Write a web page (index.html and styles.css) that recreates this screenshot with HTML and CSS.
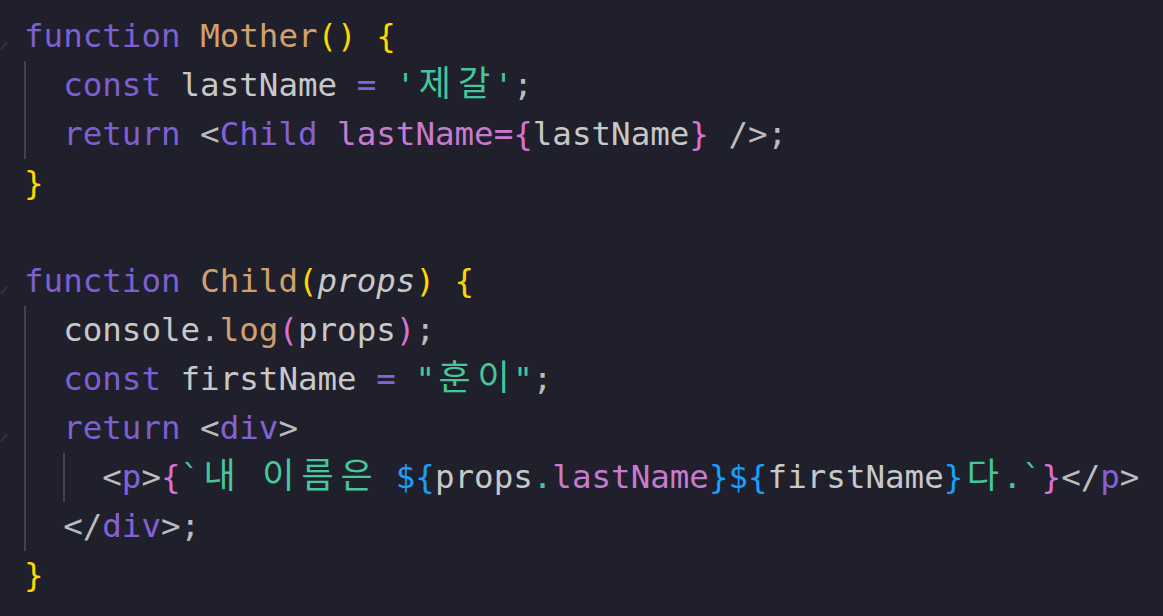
FILE: index.html
```html
<!DOCTYPE html>
<html lang="ko">
<head>
<meta charset="utf-8">
<title>Code</title>
<link rel="stylesheet" href="styles.css">
</head>
<body>
<div class="editor">
  <div class="line"><span class="gutter"><svg class="fold" width="10" height="49" viewBox="0 0 10 49"><path d="M1 37 L7 30"/></svg></span><span class="code"><span class="kw">function</span> <span class="fn">Mother</span><span class="b1">()</span> <span class="b1">{</span></span></div>
  <div class="line"><span class="gutter"></span><span class="code"><span class="ind"></span><span class="kw">const</span> <span class="var">lastName</span> <span class="op">=</span> <span class="str">'<span class="k">제</span><span class="k">갈</span>'</span><span class="pn">;</span></span></div>
  <div class="line"><span class="gutter"></span><span class="code"><span class="ind"></span><span class="kw">return</span> <span class="pn">&lt;</span><span class="tag">Child</span> <span class="attr">lastName=</span><span class="b2">{</span><span class="var">lastName</span><span class="b2">}</span><span class="pn"> /&gt;;</span></span></div>
  <div class="line"><span class="gutter"></span><span class="code"><span class="b1">}</span></span></div>
  <div class="line"><span class="gutter"></span><span class="code"></span></div>
  <div class="line"><span class="gutter"><svg class="fold" width="10" height="49" viewBox="0 0 10 49"><path d="M1 37 L7 30"/></svg></span><span class="code"><span class="kw">function</span> <span class="fn">Child</span><span class="b1">(</span><span class="param">props</span><span class="b1">)</span> <span class="b1">{</span></span></div>
  <div class="line"><span class="gutter"></span><span class="code"><span class="ind"></span><span class="var">console</span><span class="pn">.</span><span class="fn">log</span><span class="b2">(</span><span class="var">props</span><span class="b2">)</span><span class="pn">;</span></span></div>
  <div class="line"><span class="gutter"></span><span class="code"><span class="ind"></span><span class="kw">const</span> <span class="var">firstName</span> <span class="op">=</span> <span class="str">"<span class="k">훈</span><span class="k">이</span>"</span><span class="pn">;</span></span></div>
  <div class="line"><span class="gutter"><svg class="fold" width="10" height="49" viewBox="0 0 10 49"><path d="M1 37 L7 30"/></svg></span><span class="code"><span class="ind"></span><span class="kw">return</span> <span class="pn">&lt;</span><span class="tag">div</span><span class="pn">&gt;</span></span></div>
  <div class="line"><span class="gutter"></span><span class="code"><span class="ind"></span><span class="ind"></span><span class="pn">&lt;</span><span class="tag">p</span><span class="pn">&gt;</span><span class="b2">{</span><span class="str">`<span class="k">내</span> <span class="k">이</span><span class="k">름</span><span class="k">은</span> </span><span class="b3">${</span><span class="var">props</span><span class="str">.</span><span class="attr">lastName</span><span class="b3">}${</span><span class="var">firstName</span><span class="b3">}</span><span class="str"><span class="k">다</span>.`</span><span class="b2">}</span><span class="pn">&lt;/</span><span class="tag">p</span><span class="pn">&gt;</span></span></div>
  <div class="line"><span class="gutter"></span><span class="code"><span class="ind"></span><span class="pn">&lt;/</span><span class="tag">div</span><span class="pn">&gt;;</span></span></div>
  <div class="line"><span class="gutter"></span><span class="code"><span class="b1">}</span></span></div>
</div>
</body>
</html>
```
FILE: styles.css
```css
html, body {
  margin: 0;
  padding: 0;
  background: #20202c;
  height: 100%;
  overflow: hidden;
}
.editor {
  padding-top: 12px;
  font-family: "DejaVu Sans Mono", "Noto Sans CJK KR", monospace;
  font-size: 32.5px;
  line-height: 49px;
  color: #c8c8c8;
}
.line {
  display: flex;
  height: 49px;
  white-space: pre;
}
.gutter {
  width: 24px;
  flex: none;
  display: flex;
}
.fold {
  display: block;
}
.fold path {
  stroke: #3a3a48;
  stroke-width: 1.5;
  fill: none;
}
.code {
  display: block;
}
.ind {
  display: inline-block;
  width: 2ch;
  height: 49px;
  vertical-align: top;
  box-shadow: inset 2px 0 0 #43434d;
}
.k {
  display: inline-block;
  width: 39.14px;
  font-size: 35px;
  line-height: 1;
  text-align: center;
  font-weight: 400;
}
.kw { color: #7d5fd0; }
.fn { color: #d1a06e; }
.var { color: #c8c8c8; }
.op { color: #8563d8; }
.str { color: #45c79b; }
.pn { color: #bcbcbc; }
.tag { color: #8462d6; }
.attr { color: #c77bcf; }
.param { color: #c8c8c8; font-style: italic; }
.b1 { color: #ffd700; }
.b2 { color: #da70d6; }
.b3 { color: #179fff; }
```
